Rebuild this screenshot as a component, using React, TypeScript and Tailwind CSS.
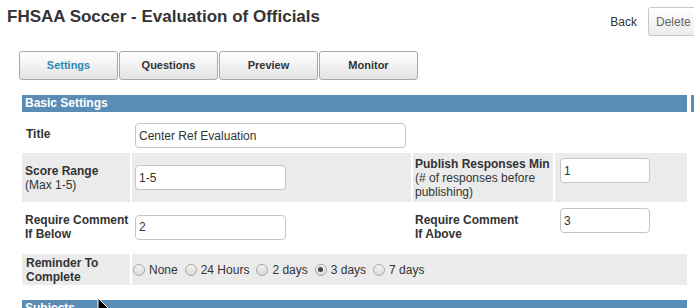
import React from 'react';

const font = { fontFamily: '"Liberation Sans", Arial, sans-serif' };

const TextBox = ({ value, width }: { value: string; width: string }) => (
  <input
    type="text"
    defaultValue={value}
    className={`${width} h-[25px] border border-[#c4c4c4] rounded-[4px] bg-white px-[3px] text-[12px] text-[#333] outline-none`}
  />
);

const Radio = ({ label, checked }: { label: string; checked?: boolean }) => (
  <div className="flex items-center">
    <span className="w-[12px] h-[12px] rounded-full border border-[#a8a8a8] bg-gradient-to-b from-[#f4f4f4] to-[#d8d8d8] flex items-center justify-center">
      {checked && <span className="w-[5px] h-[5px] rounded-full bg-[#444]" />}
    </span>
    <span className="ml-[4px] text-[12px] text-[#333]">{label}</span>
  </div>
);

const tabs = ['Settings', 'Questions', 'Preview', 'Monitor'];

const App: React.FC = () => {
  return (
    <div style={font} className="relative w-[694px] h-[308px] overflow-hidden bg-white text-[#333]">
      <div className="flex justify-between items-start h-[51px]">
        <h1 className="pl-[7px] pt-[6px] text-[17px] leading-[22px] font-bold text-[#333]">
          FHSAA Soccer - Evaluation of Officials
        </h1>
        <div className="flex items-center gap-[11px] mt-[7px] -mr-[4px]">
          <span className="text-[12px] text-[#333]">Back</span>
          <button className="w-[50px] h-[29px] border border-[#c8c8c8] rounded-[3px] bg-gradient-to-b from-white to-[#ececec] text-[12px] text-[#666] text-left pl-[7px]">
            Delete
          </button>
        </div>
      </div>

      <div className="flex gap-px pl-[19px]">
        {tabs.map((t, i) => (
          <button
            key={t}
            className={`w-[99px] h-[29px] border border-[#a9a9a9] rounded-[3px] bg-gradient-to-b from-white to-[#e4e4e4] text-[11px] font-bold ${i === 0 ? 'text-[#2a8ab2]' : 'text-[#333]'}`}
          >
            {t}
          </button>
        ))}
      </div>

      <div className="flex mt-[15px] pl-[22px]">
        <div className="w-[665px]">
          <div className="h-[17px] bg-[#5a8db6] text-white text-[12px] font-bold leading-[17px] pl-[3px]">Basic Settings</div>

          {/* Title */}
          <div className="grid grid-cols-[108px_279px_140px_132px] gap-x-[2px] h-[41px] text-[12px]">
            <div className="flex items-center pl-[4px] pt-[3px] font-bold">Title</div>
            <div className="flex items-start pl-[3px] pt-[11px]">
              <TextBox value="Center Ref Evaluation" width="w-[271px]" />
            </div>
            <div />
            <div />
          </div>

          {/* Score range */}
          <div className="grid grid-cols-[108px_279px_140px_132px] gap-x-[2px] h-[49px] text-[12px] leading-[14px]">
            <div className="bg-[#ebebeb] flex flex-col justify-center pl-[3px]">
              <span className="font-bold">Score Range</span>
              <span>(Max 1-5)</span>
            </div>
            <div className="bg-[#ebebeb] flex items-center pl-[3px]">
              <TextBox value="1-5" width="w-[151px]" />
            </div>
            <div className="bg-[#ebebeb] pl-[2px] pt-[4px]">
              <div className="font-bold">Publish Responses Min</div>
              <div>(# of responses before publishing)</div>
            </div>
            <div className="bg-[#ebebeb] pl-[5px] pt-[5px]">
              <TextBox value="1" width="w-[90px]" />
            </div>
          </div>

          {/* Require comment */}
          <div className="grid grid-cols-[108px_279px_140px_132px] gap-x-[2px] h-[50px] text-[12px] leading-[14px] font-bold">
            <div className="flex flex-col justify-center pl-[3px]">
              <span>Require Comment</span>
              <span>If Below</span>
            </div>
            <div className="flex items-center pl-[3px] font-normal">
              <TextBox value="2" width="w-[151px]" />
            </div>
            <div className="flex flex-col justify-center pl-[2px]">
              <span>Require Comment</span>
              <span>If Above</span>
            </div>
            <div className="pl-[5px] pt-[6px] font-normal">
              <TextBox value="3" width="w-[90px]" />
            </div>
          </div>

          {/* Reminder */}
          <div className="grid grid-cols-[108px_555px] gap-x-[2px] h-[31px] mt-[2px] text-[12px] leading-[14px]">
            <div className="bg-[#ebebeb] rounded-[2px] flex flex-col justify-center pl-[4px] font-bold">
              <span>Reminder To</span>
              <span>Complete</span>
            </div>
            <div className="bg-[#ebebeb] flex items-center gap-[7px] pl-[1px]">
              <Radio label="None" />
              <Radio label="24 Hours" />
              <Radio label="2 days" />
              <Radio label="3 days" checked />
              <Radio label="7 days" />
            </div>
          </div>

          <div className="mt-[15px] h-[17px] bg-[#5a8db6] text-white text-[12px] font-bold leading-[17px] pl-[3px]">Subjects</div>
        </div>
        <div className="ml-[4px] w-[3px] h-[17px] bg-[#5a8db6]" />
      </div>

      <svg className="absolute left-[97px] top-[297px]" width="14" height="22" viewBox="0 0 14 22">
        <path d="M1 1 L1 17 L5 13 L8 20 L10 19 L7 12 L12 12 Z" fill="#000" stroke="#fff" strokeWidth="1" />
      </svg>
    </div>
  );
};

export default App;
